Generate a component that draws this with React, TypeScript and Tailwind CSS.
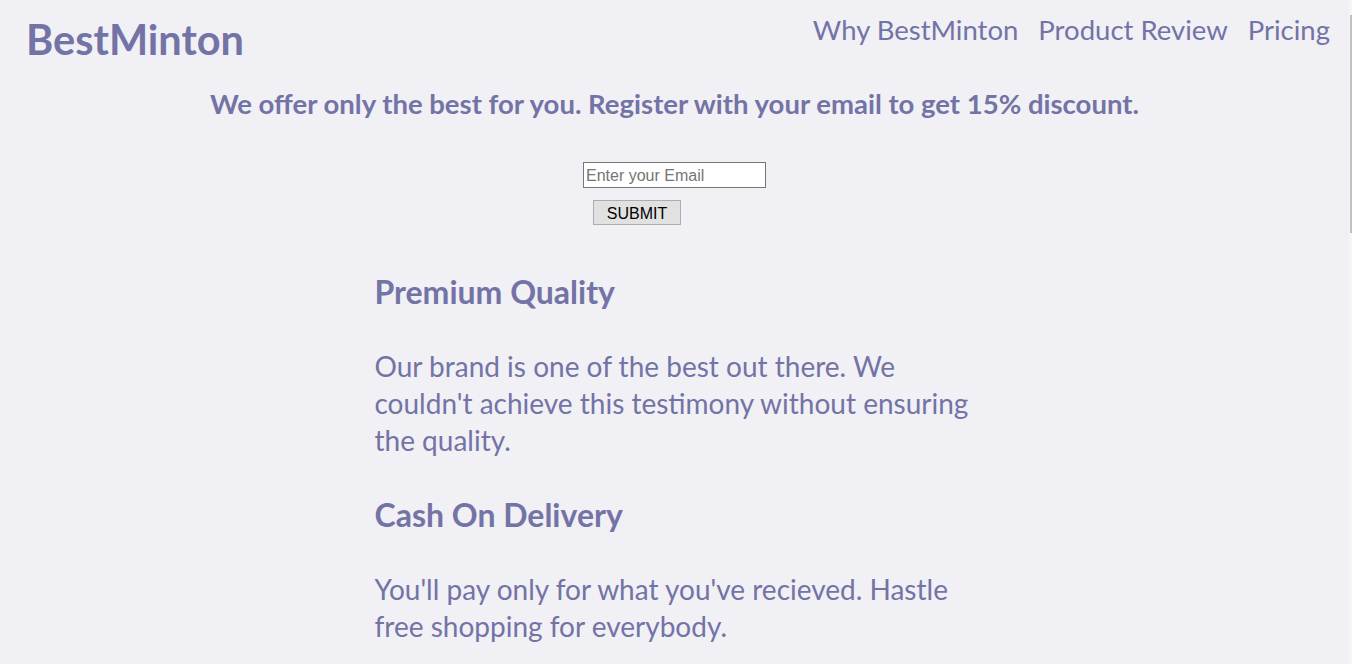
import React from 'react';

const features = [
  {
    title: 'Premium Quality',
    text: "Our brand is one of the best out there. We couldn't achieve this testimony without ensuring the quality.",
  },
  {
    title: 'Cash On Delivery',
    text: "You'll pay only for what you've recieved. Hastle free shopping for everybody.",
  },
];

const App: React.FC = () => {
  return (
    <div className="flex h-screen w-full overflow-hidden bg-[#f0f0f5] text-[#7373a6] font-['Lato',sans-serif]">
      <div className="flex-1">
        {/* Header */}
        <header className="flex items-start justify-between pl-[26px] pr-[19px]">
          <div className="mt-[15px] text-[41.5px] leading-[48px] font-bold">BestMinton</div>
          <nav className="mt-[13px] flex gap-[20px] text-[27.5px] leading-[34px]">
            <a href="#why">Why BestMinton</a>
            <a href="#review">Product Review</a>
            <a href="#pricing">Pricing</a>
          </nav>
        </header>

        {/* Signup */}
        <h1 className="mt-[26px] text-center text-[27.5px] leading-[30px] font-bold">
          We offer only the best for you. Register with your email to get 15% discount.
        </h1>
        <form className="mx-auto mt-[43px] w-[183px]" onSubmit={(e) => e.preventDefault()}>
          <input
            type="email"
            placeholder="Enter your Email"
            className="block h-[26px] w-[183px] border border-[#767676] bg-white px-[2px] pt-[2px] text-[16px] text-black placeholder:text-[#757575] font-['Liberation_Sans',sans-serif] outline-none"
          />
          <button
            type="submit"
            className="ml-[10px] mt-[12px] block h-[25px] w-[88px] border border-[#adadad] bg-[#e1e1e1] pt-[1px] text-[16px] text-black font-['Liberation_Sans',sans-serif]"
          >
            SUBMIT
          </button>
        </form>

        {/* Features */}
        <section className="mx-auto mt-[49px] w-[600px]">
          {features.map((f, i) => (
            <div key={f.title} className={i > 0 ? 'mt-[38px]' : ''}>
              <h2 className="text-[32px] leading-[36px] font-bold">{f.title}</h2>
              <p className="mt-[38px] text-[28px] leading-[37px]">{f.text}</p>
            </div>
          ))}
        </section>
      </div>

      {/* Scrollbar */}
      <div className="w-[3px] bg-[#f5f5f5] pt-[15px]">
        <div className="ml-[1px] h-[218px] w-[2px] bg-[#c1c1c1]" />
      </div>
    </div>
  );
};

export default App;
